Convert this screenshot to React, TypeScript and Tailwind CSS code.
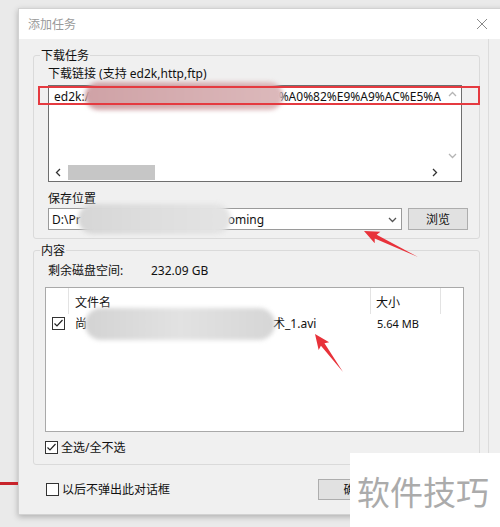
import React from "react";

type Dir = "up" | "down" | "left" | "right";

const Chevron = ({ dir, className = "" }: { dir: Dir; className?: string }) => {
  const pts = {
    up: "1,6 4.5,2.5 8,6",
    down: "1,3 4.5,6.5 8,3",
    left: "6,1 2.5,4.5 6,8",
    right: "3,1 6.5,4.5 3,8",
  }[dir];
  return (
    <svg width="9" height="9" viewBox="0 0 9 9" className={className}>
      <polyline points={pts} fill="none" stroke="currentColor" strokeWidth="1.3" />
    </svg>
  );
};

const Check = ({ checked }: { checked?: boolean }) => (
  <span className="flex h-[13px] w-[13px] shrink-0 items-center justify-center border border-[#333] bg-white">
    {checked && (
      <svg width="11" height="11" viewBox="0 0 11 11">
        <polyline points="1.5,5.5 4,8 9.5,2" fill="none" stroke="#222" strokeWidth="1.2" />
      </svg>
    )}
  </span>
);

// red annotation arrow, tail -> tip
const Arrow = ({ tx, ty, px, py }: { tx: number; ty: number; px: number; py: number }) => {
  const dx = px - tx;
  const dy = py - ty;
  const L = Math.sqrt(dx * dx + dy * dy);
  const a = (Math.atan2(dy, dx) * 180) / Math.PI;
  const pts = `0,0 ${L - 13},-2.2 ${L - 15},-6.5 ${L},0 ${L - 15},6.5 ${L - 13},2.2`;
  return <polygon points={pts} fill="#e8323a" transform={`translate(${tx} ${ty}) rotate(${a})`} />;
};

export default function App() {
  return (
    <div className="relative h-[527px] w-[500px] overflow-hidden bg-[#eaeaea] font-['Noto_Sans','Noto_Sans_CJK_SC',sans-serif] text-[12px] leading-[17px] text-[#111]">
      <div className="ml-[18px] mt-[8px] h-[507px] w-[490px] border border-[#d2d2d2] bg-[#f0f0f0] shadow-[0_2px_6px_rgba(0,0,0,0.25)]">
        {/* title bar */}
        <div className="flex h-[30px] items-center justify-between bg-white pl-[9px] pr-[19px]">
          <span className="text-[12px] text-[#9a9a9a]">添加任务</span>
          <svg width="12" height="12" viewBox="0 0 12 12">
            <path d="M1 1L11 11M11 1L1 11" stroke="#8a8a8a" strokeWidth="1" />
          </svg>
        </div>

        <div className="h-[476px] w-[470px] border-r border-[#dcdcdc] pl-[14px] pt-[8px]">
          {/* 下载任务 */}
          <fieldset className="w-[447px] rounded-[3px] border border-[#dadada] pb-[8px] pl-[14px]">
            <legend className="-ml-[8px] px-[1px]">下载任务</legend>
            <div className="pt-[1px]">下载链接 (支持 ed2k,http,ftp)</div>
            <div className="mt-[3px] flex h-[97px] w-[414px] flex-col border border-[#6e6e6e] bg-white">
              <div className="flex flex-1">
                <div className="flex h-[19px] flex-1 items-center overflow-visible pl-[5px] pr-[3px] pt-[1px]">
                  <span>ed2k:/</span>
                  <span className="-my-[6px] mx-[-4px] h-[28px] flex-1 rounded-full bg-gradient-to-r from-[#cfa2a6] to-[#dcb9bb] blur-[2px]" />
                  <span>%A0%82%E9%A9%AC%E5%A</span>
                </div>
                <div className="flex w-[17px] flex-col justify-between text-[#b5b5b5]">
                  <div className="flex h-[17px] items-center justify-center">
                    <Chevron dir="up" />
                  </div>
                  <div className="flex h-[17px] items-center justify-center">
                    <Chevron dir="down" />
                  </div>
                </div>
              </div>
              <div className="flex h-[17px] items-center">
                <div className="flex flex-1 items-center text-[#333]">
                  <div className="flex w-[19px] justify-center">
                    <Chevron dir="left" />
                  </div>
                  <div className="h-[15px] w-[87px] bg-[#c6c6c6]" />
                  <div className="flex-1" />
                  <div className="flex w-[19px] justify-center">
                    <Chevron dir="right" />
                  </div>
                </div>
                <div className="w-[17px]" />
              </div>
            </div>
            <div className="mt-[8px]">保存位置</div>
            <div className="mt-[1px] flex gap-[6px]">
              <div className="flex h-[22px] w-[354px] items-center border border-[#9a9a9a] bg-white pl-[3px] pr-[4px]">
                <span>D:\Pr</span>
                <span className="-my-[6px] mx-[-3px] h-[30px] w-[153px] rounded-full bg-gradient-to-r from-[#d6d6d6] via-[#dedede] to-[#e4e4e4] blur-[2px]" />
                <span>oming</span>
                <div className="flex-1" />
                <Chevron dir="down" className="text-[#555]" />
              </div>
              <div className="flex h-[22px] w-[60px] items-center justify-center border border-[#adadad] bg-[#e1e1e1]">
                浏览
              </div>
            </div>
          </fieldset>

          {/* 内容 */}
          <fieldset className="mt-[3px] w-[447px] rounded-[3px] border border-[#dadada] pb-[8px] pl-[11px]">
            <legend className="-ml-[5px] px-[1px]">内容</legend>
            <div className="flex pl-[3px] pt-[3px]">
              <span className="w-[103px]">剩余磁盘空间:</span>
              <span>232.09 GB</span>
            </div>
            <div className="mt-[8px] h-[145px] w-[419px] border border-[#a9a9a9] bg-white">
              <div className="flex h-[26px]">
                <div className="w-[23px] border-r border-[#e3e3e3]" />
                <div className="flex w-[302px] items-center border-r border-[#e3e3e3] pl-[6px] pt-[2px]">文件名</div>
                <div className="flex w-[70px] items-center border-r border-[#e3e3e3] pl-[5px] pt-[2px]">大小</div>
              </div>
              <div className="flex h-[19px] items-center">
                <div className="flex w-[23px] justify-center pl-[1px]">
                  <Check checked />
                </div>
                <div className="flex w-[303px] items-center pl-[6px]">
                  <span>尚</span>
                  <span className="-my-[8px] mx-[-2px] h-[32px] w-[190px] rounded-full bg-gradient-to-r from-[#d3d3d3] via-[#e2e2e2] to-[#d6d6d6] blur-[2px]" />
                  <span>术_1.avi</span>
                </div>
                <div className="pl-[5px] text-[11px]">5.64 MB</div>
              </div>
            </div>
            <label className="mt-[7px] flex items-center gap-[3px]">
              <Check checked />
              <span>全选/全不选</span>
            </label>
          </fieldset>

          <div className="mt-[14px] flex items-center justify-between pr-[95px]">
            <label className="flex items-center gap-[3px] pl-[13px]">
              <Check />
              <span>以后不弹出此对话框</span>
            </label>
            <div className="flex h-[21px] w-[75px] items-center justify-center border border-[#adadad] bg-[#e1e1e1]">
              确定
            </div>
          </div>
        </div>
      </div>

      {/* desktop line behind the dialog */}
      <div className="absolute left-0 top-[482px] h-[3px] w-[18px] bg-[#c8232b]" />

      {/* annotations */}
      <div className="absolute left-[38px] top-[86px] h-[19px] w-[442px] border-2 border-[#e53a40]" />
      <svg className="pointer-events-none absolute inset-0" width="500" height="527">
        <Arrow tx={418} ty={257} px={364} py={231} />
        <Arrow tx={343} ty={372} px={315} py={334} />
      </svg>

      {/* watermark */}
      <div className="absolute left-[350px] top-[453px] flex h-[74px] w-[150px] items-center bg-white pl-[7px] pt-[2px]">
        <span className="font-['Noto_Sans_CJK_SC',sans-serif] text-[33px] leading-none text-[#ababab]">软件技巧</span>
      </div>
    </div>
  );
}
